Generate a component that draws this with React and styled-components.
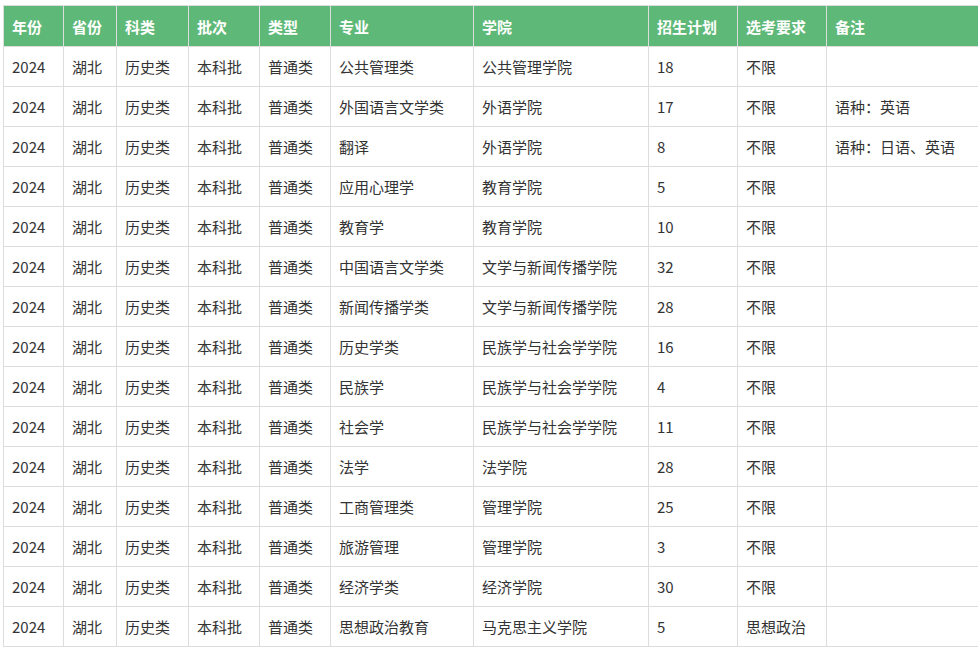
import React from "react";
import styled, { createGlobalStyle } from "styled-components";

const GlobalStyle = createGlobalStyle`
  body {
    margin: 0;
    padding: 5px 0 0 3px;
    font-family: "Microsoft YaHei", "Noto Sans CJK SC", sans-serif;
    color: #333;
    background: #fff;
  }
`;

const columns = [
  { title: "年份", width: 60 },
  { title: "省份", width: 53 },
  { title: "科类", width: 72 },
  { title: "批次", width: 71 },
  { title: "类型", width: 71 },
  { title: "专业", width: 143 },
  { title: "学院", width: 175 },
  { title: "招生计划", width: 89 },
  { title: "选考要求", width: 89 },
  { title: "备注", width: 160 },
];

const rows = [
  ["公共管理类", "公共管理学院", "18", "不限", ""],
  ["外国语言文学类", "外语学院", "17", "不限", "语种：英语"],
  ["翻译", "外语学院", "8", "不限", "语种：日语、英语"],
  ["应用心理学", "教育学院", "5", "不限", ""],
  ["教育学", "教育学院", "10", "不限", ""],
  ["中国语言文学类", "文学与新闻传播学院", "32", "不限", ""],
  ["新闻传播学类", "文学与新闻传播学院", "28", "不限", ""],
  ["历史学类", "民族学与社会学学院", "16", "不限", ""],
  ["民族学", "民族学与社会学学院", "4", "不限", ""],
  ["社会学", "民族学与社会学学院", "11", "不限", ""],
  ["法学", "法学院", "28", "不限", ""],
  ["工商管理类", "管理学院", "25", "不限", ""],
  ["旅游管理", "管理学院", "3", "不限", ""],
  ["经济学类", "经济学院", "30", "不限", ""],
  ["思想政治教育", "马克思主义学院", "5", "思想政治", ""],
];

const Table = styled.table`
  border-collapse: collapse;
  table-layout: fixed;
  width: 983px;
  font-size: 15px;
`;

const Th = styled.th`
  background: #5eb878;
  color: #fff;
  font-weight: bold;
  text-align: left;
  height: 40px;
  padding: 0 8px;
  border: 1px solid #ddd;
  white-space: nowrap;
`;

const Td = styled.td`
  height: 39px;
  padding: 0 8px;
  border: 1px solid #ddd;
  white-space: nowrap;
`;

export default function App() {
  return (
    <>
      <GlobalStyle />
      <Table>
        <colgroup>
          {columns.map((c) => (
            <col key={c.title} style={{ width: c.width }} />
          ))}
        </colgroup>
        <thead>
          <tr>
            {columns.map((c) => (
              <Th key={c.title}>{c.title}</Th>
            ))}
          </tr>
        </thead>
        <tbody>
          {rows.map((r, i) => (
            <tr key={i}>
              {["2024", "湖北", "历史类", "本科批", "普通类", ...r].map((v, j) => (
                <Td key={j}>{v}</Td>
              ))}
            </tr>
          ))}
        </tbody>
      </Table>
    </>
  );
}
